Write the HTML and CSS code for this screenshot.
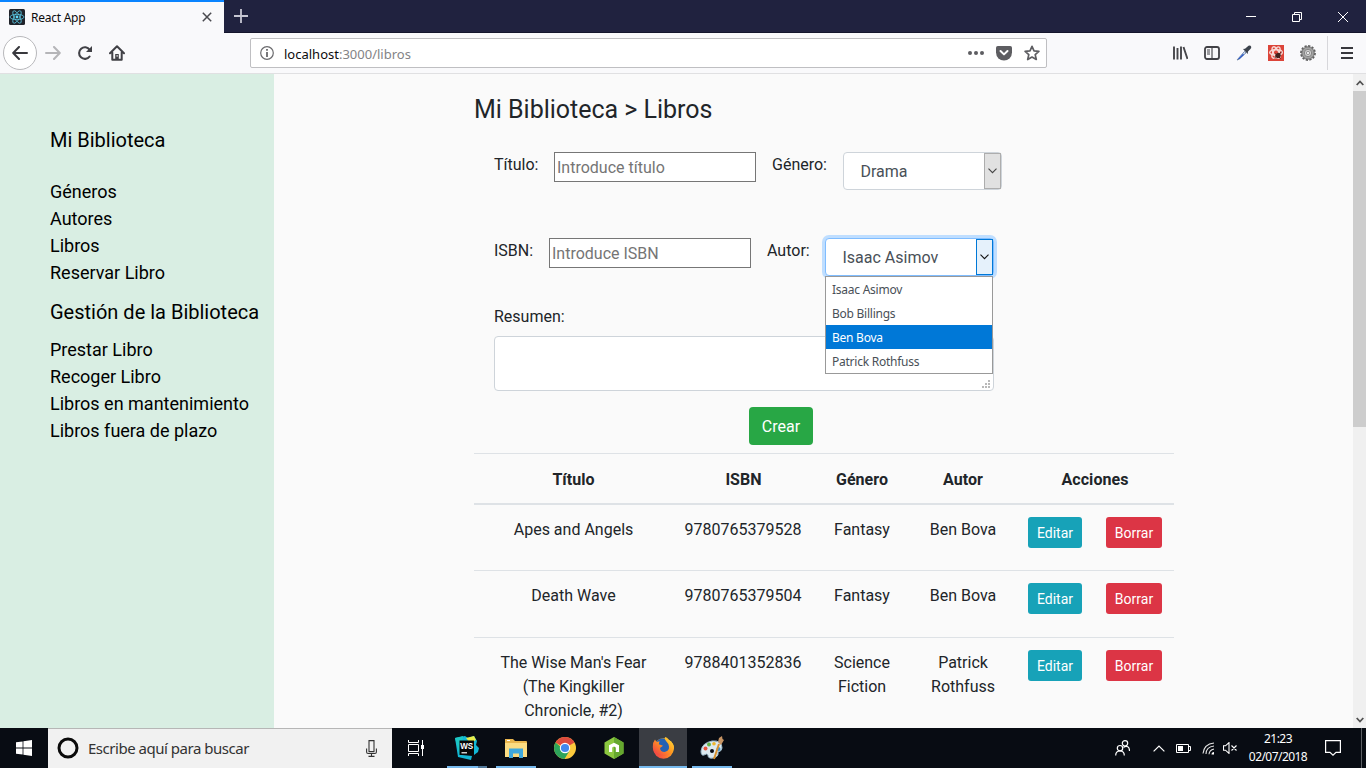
FILE: index.html
```html
<!DOCTYPE html>
<html lang="es">
<head>
<meta charset="utf-8">
<title>React App</title>
<link rel="stylesheet" href="styles.css">
</head>
<body>
<div class="screen">
  <header class="titlebar">
    <div class="tab">
      <svg class="favicon" width="16" height="16" viewBox="0 0 16 16"><rect width="16" height="16" rx="1.5" fill="#20232a"/><g fill="none" stroke="#5bc8e4" stroke-width=".8"><ellipse cx="8" cy="8" rx="7" ry="2.7"/><ellipse cx="8" cy="8" rx="7" ry="2.7" transform="rotate(60 8 8)"/><ellipse cx="8" cy="8" rx="7" ry="2.7" transform="rotate(120 8 8)"/></g><circle cx="8" cy="8" r="1.4" fill="#61dafb"/></svg>
      <span class="tab-title">React App</span>
      <svg class="tab-close" width="10" height="10" viewBox="0 0 10 10"><path d="M.8.8l8.4 8.4M9.2.8L.8 9.2" stroke="#4a4a4f" stroke-width="1.5"/></svg>
    </div>
    <svg class="new-tab" width="14" height="14" viewBox="0 0 14 14"><path d="M7 0v14M0 7h14" stroke="#c6c6d2" stroke-width="1.8"/></svg>
    <div class="win-controls">
      <svg width="10" height="10" viewBox="0 0 10 10"><path d="M0 4.5h10" stroke="#fff"/></svg>
      <svg width="10" height="10" viewBox="0 0 10 10"><path d="M.5 2.5h7v7h-7zM2.5 2.5v-2h7v7h-2" fill="none" stroke="#fff"/></svg>
      <svg width="10" height="10" viewBox="0 0 10 10"><path d="M0 0l10 10M10 0L0 10" stroke="#fff"/></svg>
    </div>
  </header>

  <nav class="navbar">
    <div class="back"><svg width="16" height="14" viewBox="0 0 16 14"><path d="M15 7H1.5M7 1L1.2 7 7 13" fill="none" stroke="#38383d" stroke-width="2" stroke-linecap="round" stroke-linejoin="round"/></svg></div>
    <svg class="forward" width="16" height="14" viewBox="0 0 16 14"><path d="M1 7h13.5M9 1l5.8 6L9 13" fill="none" stroke="#b5b5b8" stroke-width="2" stroke-linecap="round" stroke-linejoin="round"/></svg>
    <svg class="reload" width="16" height="16" viewBox="0 0 16 16"><path d="M12.6 11.5A5.8 5.8 0 1 1 12.7 4.8" fill="none" stroke="#414146" stroke-width="2.1" stroke-linecap="round"/><path d="M15 1v6H9z" fill="#414146"/></svg>
    <svg class="home" width="16" height="16" viewBox="0 0 16 16"><path d="M1 8.2L8 1.3l7 6.9M3.3 7.5v7.2h9.4V7.5" fill="none" stroke="#414146" stroke-width="2" stroke-linecap="round" stroke-linejoin="round"/><path d="M6.2 9h3.6v5.5H6.2z" fill="#414146"/><path d="M7.6 10h1v1.8h-1z" fill="#f9f9fa"/></svg>
    <div class="urlbar">
      <svg width="14" height="14" viewBox="0 0 14 14"><circle cx="7" cy="7" r="6.3" fill="none" stroke="#6b6b6e" stroke-width="1.2"/><path d="M7 6v5M7 3v1.8" stroke="#606063" stroke-width="1.7"/></svg>
      <span class="url"><span class="host">localhost</span>:3000/libros</span>
      <span class="url-icons">
        <svg width="16" height="4" viewBox="0 0 16 4"><g fill="#5d5d61"><circle cx="2" cy="2" r="2"/><circle cx="8" cy="2" r="2"/><circle cx="14" cy="2" r="2"/></g></svg>
        <svg width="16" height="15" viewBox="0 0 16 15"><path d="M1.8 0h12.4Q16 0 16 1.8V6.5a8 8 0 0 1-16 0V1.8Q0 0 1.8 0z" fill="#5d5d61"/><path d="M4.5 5L8 8.4 11.5 5" fill="none" stroke="#fff" stroke-width="2" stroke-linecap="round" stroke-linejoin="round"/></svg>
        <svg width="16" height="16" viewBox="0 0 16 16"><path d="M8 1.3l2 4.5 4.9.5-3.7 3.3 1.1 4.9L8 12l-4.3 2.5 1.1-4.9L1.1 6.3 6 5.8z" fill="none" stroke="#5d5d61" stroke-width="1.7" stroke-linejoin="round"/></svg>
      </span>
    </div>
    <div class="tools">
      <svg width="16" height="16" viewBox="0 0 16 16"><path d="M2 1.5v13M5.500 3v11.500M9 1.500v13M11.500 2l4 12" fill="none" stroke="#47474b" stroke-width="1.9"/></svg>
      <svg width="16" height="14" viewBox="0 0 16 14"><rect x="1" y="1" width="14" height="12" rx="2" fill="none" stroke="#414146" stroke-width="1.8"/><path d="M8 1v12M3 4h3M3 6h3M3 8h3" stroke="#414146" stroke-width="1.1"/></svg>
      <svg width="16" height="16" viewBox="0 0 16 16"><path d="M1 15L8.500 6.500l1.500 1.300L3 14.300z" fill="#d8e4f6" stroke="#7188ad"/><path d="M2 14l5-5.200 1 1L3.500 14z" fill="#2857c5"/><path d="M7 4l2-.3L12.500.8q2-.7 2.700 1 .3 1.400-.8 2.200L12 6.500 11.700 9z" fill="#3b424c"/></svg>
      <svg width="16" height="16" viewBox="0 0 16 16"><rect width="16" height="16" fill="#dc4439"/><g fill="none" stroke="#f7dad6" stroke-width="1.4"><ellipse cx="8" cy="7.500" rx="6.300" ry="2.700"/><ellipse cx="8" cy="7.500" rx="6.300" ry="2.700" transform="rotate(60 8 7.500)"/><ellipse cx="8" cy="7.500" rx="6.300" ry="2.700" transform="rotate(120 8 7.500)"/></g><ellipse cx="10" cy="10.500" rx="2.800" ry="2.500" transform="rotate(-35 10 10.500)" fill="#42211c"/><path d="M6.500 13l7-6M7.500 8.500l5 5" stroke="#42211c"/></svg>
      <svg width="16" height="16" viewBox="0 0 16 16"><circle cx="8" cy="8" r="6.900" fill="none" stroke="#5f5f5f" stroke-width="2" stroke-dasharray="2.200 1.400"/><circle cx="8" cy="8" r="6.200" fill="#a3a3a3" stroke="#6e6e6e"/><circle cx="8" cy="8" r="3.700" fill="#cfcfcf" stroke="#858585"/><circle cx="8" cy="8" r="1.600" fill="#f6f6f6" stroke="#777" stroke-width=".7"/></svg>
    </div>
    <div class="menu"><svg width="12" height="12" viewBox="0 0 12 12"><path d="M0 1h12M0 6h12M0 11h12" stroke="#38383d" stroke-width="2"/></svg></div>
  </nav>

  <div class="viewport">
    <aside class="sidebar">
      <h2 class="side-title">Mi Biblioteca</h2>
      <ul class="side-list first"><li>Géneros</li><li>Autores</li><li>Libros</li><li>Reservar Libro</li></ul>
      <h2 class="side-title">Gestión de la Biblioteca</h2>
      <ul class="side-list"><li>Prestar Libro</li><li>Recoger Libro</li><li>Libros en mantenimiento</li><li>Libros fuera de plazo</li></ul>
    </aside>

    <main class="content">
      <h1 class="page-title">Mi Biblioteca &gt; Libros</h1>
      <form class="book-form">
        <div class="form-row">
          <label class="label-title">Título:</label><input class="text-input" type="text" placeholder="Introduce título">
          <label class="label-genre">Género:</label>
          <div class="select genre"><span>Drama</span><i class="select-arrow"><svg width="9" height="6" viewBox="0 0 9 6"><path d="M.5.7l4 4 4-4" fill="none" stroke="#444" stroke-width="1.1"/></svg></i></div>
        </div>
        <div class="form-row">
          <label class="label-isbn">ISBN:</label><input class="text-input" type="text" placeholder="Introduce ISBN">
          <label class="label-author">Autor:</label>
          <div class="select author"><span>Isaac Asimov</span><i class="select-arrow"><svg width="9" height="6" viewBox="0 0 9 6"><path d="M.5.7l4 4 4-4" fill="none" stroke="#111" stroke-width="1.1"/></svg></i>
            <ul class="options"><li>Isaac Asimov</li><li>Bob Billings</li><li class="active">Ben Bova</li><li>Patrick Rothfuss</li></ul>
          </div>
        </div>
        <label class="summary-label">Resumen:</label>
        <div class="summary"><svg width="8" height="8" viewBox="0 0 8 8"><path d="M6 0h2v2H6zM3 3h2v2H3zM6 3h2v2H6zM0 6h2v2H0zM3 6h2v2H3zM6 6h2v2H6z" fill="#b9b9b9"/></svg></div>
      </form>
      <button class="btn create" type="button">Crear</button>
      <table class="books">
        <colgroup><col class="c-title"><col class="c-isbn"><col class="c-genre"><col class="c-author"><col class="c-edit"><col class="c-delete"></colgroup>
        <thead><tr><th>Título</th><th>ISBN</th><th>Género</th><th>Autor</th><th colspan="2">Acciones</th></tr></thead>
        <tbody>
          <tr class="row-first"><td>Apes and Angels</td><td class="isbn">9780765379528</td><td>Fantasy</td><td>Ben Bova</td><td class="action"><button class="btn edit" type="button">Editar</button></td><td class="action"><button class="btn delete" type="button">Borrar</button></td></tr>
          <tr><td>Death Wave</td><td class="isbn">9780765379504</td><td>Fantasy</td><td>Ben Bova</td><td class="action"><button class="btn edit" type="button">Editar</button></td><td class="action"><button class="btn delete" type="button">Borrar</button></td></tr>
          <tr><td>The Wise Man's Fear (The Kingkiller Chronicle, #2)</td><td class="isbn">9788401352836</td><td>Science Fiction</td><td>Patrick Rothfuss</td><td class="action"><button class="btn edit" type="button">Editar</button></td><td class="action"><button class="btn delete" type="button">Borrar</button></td></tr>
        </tbody>
      </table>
    </main>

    <div class="scrollbar">
      <svg width="8" height="6" viewBox="0 0 8 6"><path d="M.7 5L4 1.500 7.300 5" fill="none" stroke="#505050" stroke-width="1.8"/></svg>
      <div class="thumb"></div>
      <svg width="8" height="6" viewBox="0 0 8 6"><path d="M.7 1L4 4.500 7.300 1" fill="none" stroke="#505050" stroke-width="1.8"/></svg>
    </div>
  </div>

  <footer class="taskbar">
    <div class="start"><svg width="16" height="16" viewBox="0 0 16 16"><path d="M0 2.300L6.600 1.400v6.200H0zM7.400 1.200L16 0v7.600H7.400zM0 8.400h6.600v6.200L0 13.700zM7.400 8.400H16V16l-8.600-1.200z" fill="#fff"/></svg></div>
    <div class="search">
      <svg width="22" height="22" viewBox="0 0 22 22"><circle cx="11" cy="11" r="9" fill="none" stroke="#0a0a0a" stroke-width="3"/></svg>
      <span class="search-text">Escribe aquí para buscar</span>
      <svg class="mic" width="11" height="17" viewBox="0 0 11 17"><path d="M3 .6h5v11H3zM.6 8.500v3.500q0 1.500 1.500 1.500h6.800q1.500 0 1.500-1.500V8.500M5.500 13.500v3M2.500 16.400h6" fill="none" stroke="#333" stroke-width="1.1"/></svg>
    </div>
    <div class="apps">
      <div class="app task-view"><svg width="17" height="16" viewBox="0 0 17 16"><path d="M.5 0v2.500h10V0M.5 16v-2.500h10V16M.5 4.500h10v7H.5zM14.500 0v16" fill="none" stroke="#fff"/><path d="M13 5h3v4h-3z" fill="#fff"/></svg></div>
      <div class="app"><svg width="24" height="24" viewBox="0 0 24 24"><path d="M0 2l10-2 3 2 6-2 3 5-1 4 3 3-1 4-4 3H7l10 1-1 4L3 21z" fill="#12b7d5"/><path d="M11 2l8-2 2 4-6 3z" fill="#e8ed4a"/><path d="M0 2l8-2-3 20z" fill="#1dc7c2"/><rect x="4.500" y="4.500" width="14.500" height="14.500" fill="#070707"/><path d="M6.500 16.800h5.500" stroke="#fff" stroke-width="1.2"/><text x="5.200" y="13" font-family="Liberation Sans, sans-serif" font-size="8.500" font-weight="700" fill="#fff" textLength="13" lengthAdjust="spacingAndGlyphs">WS</text></svg><i class="running split"></i></div>
      <div class="app"><svg width="22" height="20" viewBox="0 0 22 20"><path d="M0 1h8l2 2h11q1 0 1 1v15H0z" fill="#e9b64e"/><path d="M0 5h22v14H0z" fill="#fbdc82"/><path d="M4 10.500h14V20h-4v-4.500H8V20H4z" fill="#3fa8dc"/><path d="M2 2.500h3" stroke="#fff"/></svg><i class="running"></i></div>
      <div class="app"><svg width="22" height="22" viewBox="0 0 22 22"><circle cx="11" cy="11" r="11" fill="#fcca3c"/><path d="M11 11L1.500 5.500A11 11 0 0 1 20.500 5.500z" fill="#dd4b3e"/><path d="M1.500 5.500A11 11 0 0 0 10.500 22L15.700 13.500H11z" fill="#2da45b"/><circle cx="11" cy="11" r="5.200" fill="#fff"/><circle cx="11" cy="11" r="4.100" fill="#4388ed"/></svg></div>
      <div class="app"><svg width="20" height="22" viewBox="0 0 20 22"><path d="M10 0l9.500 5.500v11L10 22 .5 16.500v-11z" fill="#8cc840"/><path d="M10 0l9.500 5.500v11L10 22z" fill="#65a82f"/><path d="M5 15V8.300L10 5.700l5 2.600V15h-3.200V10.500L10 9.500l-1.800 1V15z" fill="#fff"/></svg></div>
      <div class="app current"><svg width="23" height="22" viewBox="0 0 23 22"><defs><linearGradient id="flame" x1="1" y1="0" x2="0" y2="1"><stop offset="0" stop-color="#ffe63d"/><stop offset=".45" stop-color="#ff9a20"/><stop offset="1" stop-color="#ef2d50"/></linearGradient></defs><circle cx="11.500" cy="11.500" r="10.300" fill="url(#flame)"/><path d="M3.500 6Q6 1 11.500 1.500q4 1 6 6 .5 6-4 8-6 1-8-3z" fill="#2361b4"/><path d="M.8 10Q.7 5 3 2.500L4.500 5l3-.7-.7 3 4.200 1.500-3 2.200q.3 4 4.500 4 5-1 4.500-5.500-.4-3-3-5.500-2-2-1-4 2 0 4 3 5 3 5 8-1 7-9 8Q1 19 .8 10z" fill="url(#flame)"/></svg><i class="running"></i></div>
      <div class="app"><svg width="24" height="24" viewBox="0 0 24 24"><path d="M1 15Q2 7 12 5q10-1 10 7 0 3-4 4 1 5-5 6-5 1-5-3-1-2-4 0-3 1-3-4z" fill="#dce9ef" stroke="#9bb9c9"/><circle cx="12" cy="15" r="2" fill="#080b12"/><circle cx="5.500" cy="12.500" r="2" fill="#e7553d"/><circle cx="9" cy="8.500" r="2" fill="#61b547"/><circle cx="14" cy="7.800" r="1.800" fill="#eeb52e"/><circle cx="18.500" cy="13" r="2" fill="#3d94d7"/><path d="M14 23l5-15" stroke="#d8902d" stroke-width="2"/><path d="M18 6l1-4 3-2 .5 3 1.500 1-3 5z" fill="#c69464"/></svg><i class="running"></i></div>
    </div>
    <div class="tray">
      <svg class="people" width="15" height="16" viewBox="0 0 15 16"><g fill="none" stroke="#fff" stroke-width="1.2"><circle cx="10" cy="3.300" r="2.700"/><circle cx="5" cy="8.200" r="2.700"/><path d="M.7 15.500q0-4.500 4.300-4.500t4.300 4.500M8.500 7.500q2-1.800 4.300-.7 1.700 1 1.700 4.200"/></g></svg>
      <svg class="chevron" width="12" height="7" viewBox="0 0 12 7"><path d="M.6 6.400L6 1l5.400 5.400" fill="none" stroke="#fff" stroke-width="1.2"/></svg>
      <svg class="battery" width="15" height="9" viewBox="0 0 15 9"><path d="M.5.5h12v8H.5zM13 2.500h1.500v4H13" fill="none" stroke="#fff"/><path d="M2 2h5v5H2z" fill="#fff"/></svg>
      <svg class="wifi" width="13" height="13" viewBox="0 0 13 13"><g fill="none" stroke="#e6e6e6" stroke-width="1.1"><path d="M1 11.500Q2 2 12 1M4 12Q4 5 12 4M7 12.300Q7.300 8 12 7"/></g><path d="M9.500 12.500q0-2.500 2.500-2.500v2.500z" fill="#fff"/></svg>
      <svg class="sound" width="15" height="12" viewBox="0 0 15 12"><path d="M.5 3.800h2L6 .6v10.800L2.500 8.200h-2zM8.500 3.500l5 5M13.500 3.500l-5 5" fill="none" stroke="#fff" stroke-width="1.1"/></svg>
      <div class="clock"><span class="time">21:23</span><span class="date">02/07/2018</span></div>
      <svg class="notice" width="16" height="16" viewBox="0 0 16 16"><path d="M.6.6h14.800v11.800H11L8 15.200l-3-2.800H.6z" fill="none" stroke="#fff" stroke-width="1.2"/></svg>
      <i class="desktop-edge"></i>
    </div>
  </footer>
</div>
</body>
</html>
```
FILE: styles.css
```css
* { box-sizing: border-box; }
body { margin: 0; overflow: hidden; font-family: Roboto, sans-serif; color: #212529; }
svg { display: block; flex: none; }
h1, h2, ul { margin: 0; padding: 0; font-weight: 400; list-style: none; }
.screen { width: 1366px; height: 768px; display: flex; flex-direction: column; overflow: hidden; background: #fafafa; }

.titlebar { height: 33px; flex: none; display: flex; background: #20223f; border-bottom: 1px solid #14152c; }
.tab { width: 224px; height: 33px; flex: none; display: flex; align-items: center; padding: 0 12px 1px 9px; background: #f9f9fb; border-top: 2px solid #0a84ff; font: 12px "Noto Sans", sans-serif; color: #0c0c0d; }
.tab-title { margin-left: 6px; letter-spacing: -.25px; white-space: nowrap; }
.tab-close { margin-left: auto; }
.new-tab { margin: 9px 0 0 10px; }
.win-controls { margin-left: auto; padding: 12px 18px 0 0; display: flex; gap: 36px; }

.navbar { height: 41px; flex: none; display: flex; align-items: center; background: #f9f9fb; border-bottom: 1px solid #e0e0e2; padding-left: 3px; }
.back { width: 34px; height: 34px; border: 1px solid #b8b8bb; border-radius: 50%; background: #fff; display: flex; align-items: center; justify-content: center; }
.forward { margin-left: 8px; }
.reload { margin-left: 16px; }
.home { margin-left: 16px; }
.urlbar { width: 797px; height: 30px; margin-left: 125px; border: 1px solid #bfbfc2; border-radius: 2px; background: #fff; display: flex; align-items: center; padding: 0 6px 0 9px; }
.url { margin-left: 10px; padding-top: 1px; font: 13px "Noto Sans", sans-serif; color: #838386; }
.host { color: #0c0c0d; }
.url-icons { margin-left: auto; display: flex; gap: 12px; align-items: center; }
.tools { margin-left: 125px; display: flex; gap: 16px; align-items: center; }
.menu { margin-left: 11px; height: 34px; border-left: 1px solid #d7d7db; padding-left: 13px; display: flex; align-items: center; }

.viewport { height: 654px; flex: none; display: flex; overflow: hidden; }
.sidebar { width: 274px; flex: none; background: #d9eee3; padding: 54px 0 0 50px; color: #000; white-space: nowrap; }
.side-title { font-size: 20px; line-height: 24px; }
.side-list { font-size: 18px; line-height: 27px; margin-top: 12px; }
.side-list.first { margin: 26px 0 14px; }
.content { width: 1079px; flex: none; padding: 0 0 0 200px; }
.page-title { font-size: 25px; line-height: 30px; margin-top: 21px; letter-spacing: -.02px; }
.book-form { width: 540px; padding: 27px 0 0 20px; }
.form-row { display: flex; align-items: flex-start; height: 86px; line-height: 24px; white-space: nowrap; }
.form-row label { padding-top: 1px; }
.label-title { width: 60px; }
.label-isbn { width: 55px; }
.label-genre { width: 71px; margin-left: 16px; }
.label-author { width: 58px; margin-left: 16px; }
.text-input { width: 202px; height: 30px; margin: 0; padding: 1px 2px; border: 1px solid #767676; background: #fff; font: 16px Roboto, sans-serif; }
.text-input::placeholder { color: #757575; }
.select { position: relative; height: 38px; display: flex; align-items: center; padding-left: 16.5px; background: #fff; border: 1px solid #ced4da; border-radius: 4px; color: #495057; }
.select span { padding-top: 2px; }
.genre { width: 159px; }
.author { width: 169px; border-color: #80bdff; box-shadow: 0 0 0 3px #bfdeff; }
.select-arrow { width: 17px; height: 36px; margin-left: auto; display: flex; align-items: center; justify-content: center; background: #e1e1e1; border: 1px solid #adadad; }
.author .select-arrow { background: #e5f1fb; border-color: #0078d7; }
.options { position: absolute; z-index: 2; top: 37px; left: -1px; width: 168px; height: 98px; border: 1px solid #999; background: #fff; font: 12px/24px "Noto Sans", sans-serif; letter-spacing: -.25px; }
.options li { padding: 1px 0 0 6px; height: 24px; }
.options .active { background: #0078d7; color: #fff; }
.summary-label { display: block; line-height: 24px; margin-top: -19px; }
.summary { width: 500px; height: 55px; margin-top: 7px; padding: 0 3px 2px 0; display: flex; justify-content: flex-end; align-items: flex-end; border: 1px solid #ced4da; border-radius: 4px; background: #fff; }
.btn { display: block; margin: 0; padding: 0; border: 0; color: #fff; font-family: Roboto, sans-serif; text-align: center; }
.create { width: 64px; height: 38px; margin: 16px 0 8px 275px; border-radius: 4px; background: #28a745; font-size: 16px; }
.books { width: 700px; table-layout: fixed; border-collapse: separate; border-spacing: 0; font-size: 16px; line-height: 24px; text-align: center; }
.c-title { width: 199px; } .c-isbn { width: 141px; } .c-genre { width: 96px; } .c-author { width: 106px; } .c-edit { width: 78px; } .c-delete { width: 80px; }
.books th { height: 52px; padding: 13px 12px 11px; border-top: 1px solid #dee2e6; border-bottom: 2px solid #dee2e6; font-weight: 700; letter-spacing: .05px; }
.books td { height: 67px; padding: 13px 12px 11px; border-top: 1px solid #dee2e6; vertical-align: top; }
.books td.isbn { padding-left: 11px; }
.books td.action { padding: 12px; }
.books .row-first td { height: 65px; border-top: 0; }
.edit, .delete { height: 31px; border-radius: 3px; font-size: 14px; }
.edit { width: 54px; background: #17a2b8; }
.delete { width: 56px; background: #dc3545; }
.scrollbar { width: 13px; flex: none; display: flex; flex-direction: column; align-items: center; background: #f0f0f0; padding: 6px 0 5px; }
.thumb { width: 13px; height: 336px; margin: 5px 0 auto; background: #cdcdcd; }

.taskbar { height: 40px; flex: none; display: flex; background: #080c13; }
.start { width: 48px; display: flex; align-items: center; justify-content: center; }
.search { width: 344px; display: flex; align-items: center; padding: 0 15px 1px 9px; background: #f1f1f1; border-top: 1px solid #b6b6b6; color: #333; }
.search-text { margin-left: 9px; padding-bottom: 1px; font: 15px "Noto Sans", sans-serif; letter-spacing: -.48px; white-space: nowrap; }
.mic { margin-left: auto; }
.apps { display: flex; }
.app { position: relative; width: 49px; display: flex; align-items: center; justify-content: center; }
.app.task-view { width: 50px; padding-right: 1px; }
.current { width: 48px; margin-left: 1px; background: #3a3d43; }
.running { position: absolute; bottom: 0; left: 5px; width: 40px; height: 2px; background: #76b9ed; }
.current .running { left: 0; width: 48px; }
.split { border-right: 9px solid #52799a; }
.tray { margin-left: auto; display: flex; align-items: center; color: #fff; }
.chevron { margin-left: 23px; } .battery { margin-left: 11px; } .wifi { margin-left: 11px; } .sound { margin-left: 8px; }
.clock { width: 60px; margin-left: 10px; font: 12px/18px "Noto Sans", sans-serif; letter-spacing: -.55px; display: flex; flex-direction: column; align-items: center; white-space: nowrap; }
.notice { margin-left: 17px; }
.desktop-edge { width: 1px; height: 40px; margin: 0 4px 0 20px; background: #5c5f64; }
```
